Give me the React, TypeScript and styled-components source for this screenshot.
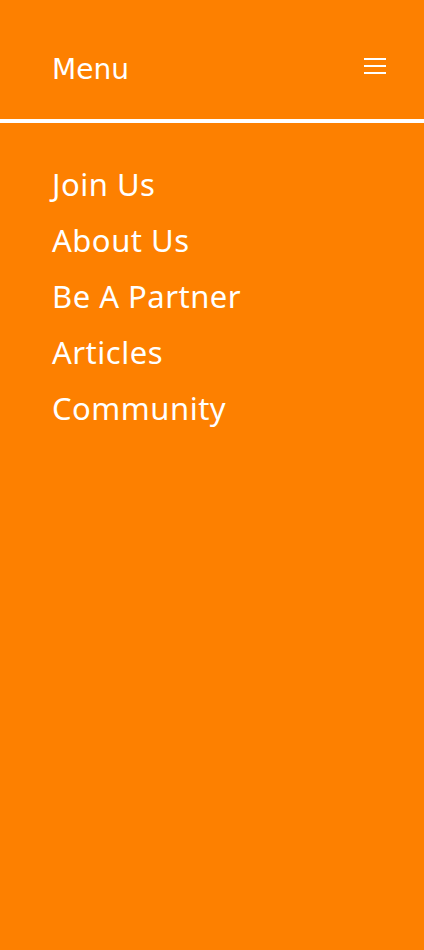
import React from "react";
import styled, { createGlobalStyle } from "styled-components";

const Global = createGlobalStyle`
  html, body { margin: 0; padding: 0; background: #fd8000; }
  body { font-family: "Noto Sans", sans-serif; }
`;

const Page = styled.div`
  min-height: 950px;
  background: #fd8000;
  color: #ffffff;
`;

const Header = styled.header`
  height: 123px;
  box-sizing: border-box;
  padding: 56px 38px 0 52px;
  display: flex;
  align-items: flex-start;
  justify-content: space-between;
  border-bottom: 4px solid #ffffff;
`;

const Title = styled.h1`
  margin: 0;
  font-family: "DejaVu Sans", sans-serif;
  font-weight: 400;
  font-size: 28px;
  line-height: 28px;
`;

const Burger = styled.button`
  background: none;
  border: none;
  padding: 0;
  width: 22px;
  height: 16px;
  margin-top: 2px;
  display: flex;
  flex-direction: column;
  justify-content: space-between;
  cursor: pointer;
`;

const BurgerLine = styled.span`
  display: block;
  height: 2px;
  width: 22px;
  background: #ffffff;
`;

const Nav = styled.nav`
  padding: 33px 52px 0;
  display: flex;
  flex-direction: column;
  align-items: flex-start;
`;

const NavLink = styled.a`
  color: #ffffff;
  text-decoration: none;
  font-family: "Noto Sans", sans-serif;
  font-size: 31px;
  letter-spacing: 0.5px;
  line-height: 56px;
  height: 56px;
`;

const items = ["Join Us", "About Us", "Be A Partner", "Articles", "Community"];

export default function App() {
  return (
    <Page>
      <Global />
      <Header>
        <Title>Menu</Title>
        <Burger aria-label="menu">
          <BurgerLine />
          <BurgerLine />
          <BurgerLine />
        </Burger>
      </Header>
      <Nav>
        {items.map((t) => (
          <NavLink key={t} href="#">
            {t}
          </NavLink>
        ))}
      </Nav>
    </Page>
  );
}
